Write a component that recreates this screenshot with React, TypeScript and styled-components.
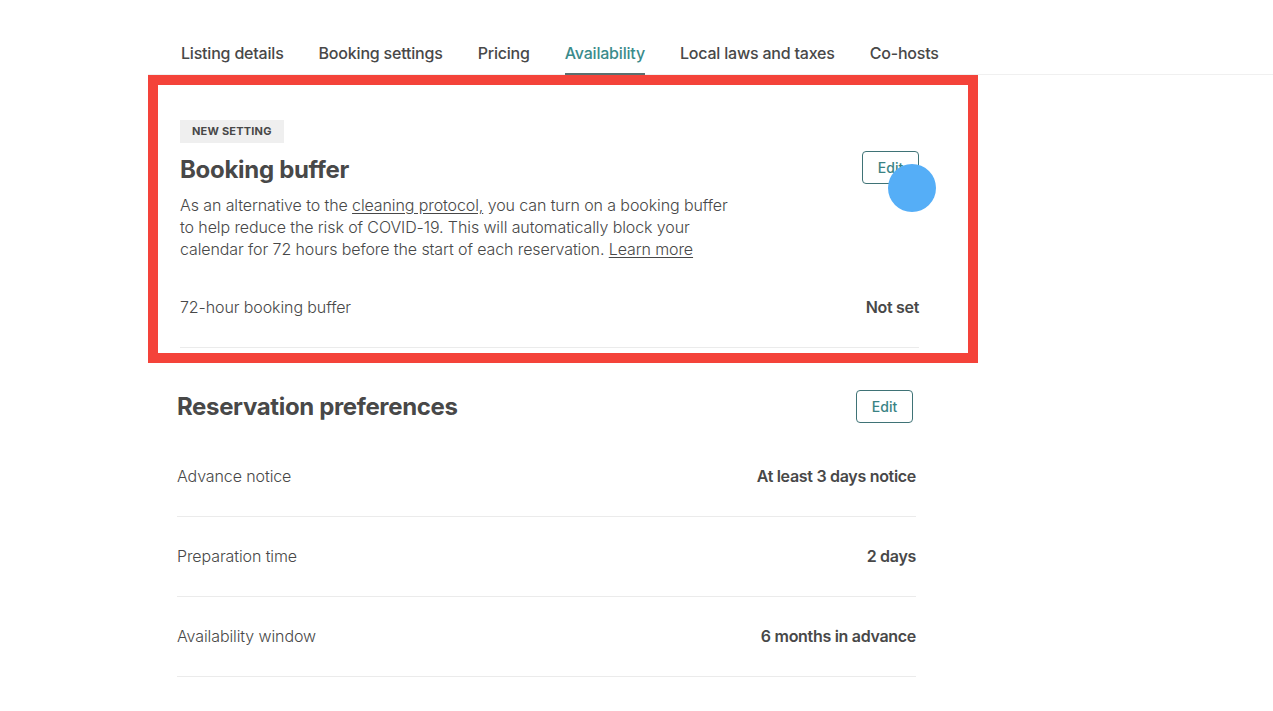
import * as React from "react";
import styled, { createGlobalStyle } from "styled-components";

const GlobalStyle = createGlobalStyle`
  body {
    margin: 0;
    background: #ffffff;
    font-family: Inter, "Noto Sans", "Liberation Sans", sans-serif;
    color: #484848;
    letter-spacing: -0.1px;
  }
`;

const Page = styled.div`
  width: 1273px;
  height: 711px;
  overflow: hidden;
  padding-left: 148px;
  box-sizing: border-box;
`;

const Nav = styled.nav`
  display: flex;
  gap: 35px;
  padding-left: 33px;
  border-bottom: 1px solid #f0f0f0;
`;

const Tab = styled.a<{ $active?: boolean }>`
  display: block;
  padding: 42px 0 9px;
  margin-bottom: -1px;
  font-size: 16px;
  line-height: 22px;
  font-weight: 500;
  letter-spacing: -0.2px;
  color: ${(p) => (p.$active ? "#3a8b8b" : "#484848")};
  border-bottom: 2px solid ${(p) => (p.$active ? "#5b6f6f" : "transparent")};
  white-space: nowrap;
`;

const Highlight = styled.section`
  width: 830px;
  box-sizing: border-box;
  border: 10px solid #f4433a;
  padding: 34px 49px 5px 22px;
`;

const Header = styled.div`
  display: flex;
  justify-content: space-between;
  align-items: flex-start;
`;

const Badge = styled.span`
  display: inline-block;
  background: #efefef;
  padding: 0 12px;
  height: 23px;
  line-height: 23px;
  font-size: 11px;
  font-weight: 700;
  letter-spacing: 0.2px;
  color: #484848;
`;

const Title = styled.h2`
  margin: 12px 0 0;
  font-size: 24px;
  line-height: 30px;
  font-weight: 700;
  letter-spacing: -0.3px;
  color: #484848;
`;

const Text = styled.p`
  margin: 9px 0 0;
  width: 556px;
  font-size: 16px;
  line-height: 22px;
  font-weight: 300;
  color: #484848;
`;

const Link = styled.a`
  color: #484848;
  text-decoration: underline;
  text-underline-offset: 2px;
`;

const ButtonWrap = styled.div<{ $top?: number }>`
  position: relative;
  margin-top: ${(p) => p.$top ?? 0}px;
`;

const EditButton = styled.button`
  width: 57px;
  height: 33px;
  border: 1px solid #3f7376;
  border-radius: 4px;
  background: #ffffff;
  color: #3a8384;
  font-family: inherit;
  font-size: 14px;
  font-weight: 500;
  padding: 0;
`;

const Dot = styled.span`
  position: absolute;
  left: 26px;
  top: 13px;
  width: 48px;
  height: 48px;
  border-radius: 50%;
  background: #55aef7;
`;

const Row = styled.div<{ $first?: boolean }>`
  display: flex;
  justify-content: space-between;
  align-items: center;
  padding: 28px 0 29px;
  margin-top: ${(p) => (p.$first ? 8 : 0)}px;
  border-bottom: 1px solid #ebebeb;
  font-size: 16px;
  line-height: 22px;
`;

const Label = styled.span`
  font-weight: 300;
  color: #484848;
`;

const Value = styled.span`
  font-weight: 600;
  letter-spacing: -0.3px;
  color: #484848;
`;

const Section = styled.section`
  width: 739px;
  margin: 27px 0 0 29px;
`;

const SectionHeader = styled.div`
  display: flex;
  justify-content: space-between;
  align-items: center;
  padding-right: 3px;
  margin-bottom: 14px;
`;

const SectionTitle = styled.h2`
  margin: 0;
  font-size: 24px;
  line-height: 30px;
  font-weight: 700;
  letter-spacing: -0.35px;
  color: #484848;
`;

const tabs = [
  "Listing details",
  "Booking settings",
  "Pricing",
  "Availability",
  "Local laws and taxes",
  "Co-hosts",
];

const prefs = [
  { label: "Advance notice", value: "At least 3 days notice" },
  { label: "Preparation time", value: "2 days" },
  { label: "Availability window", value: "6 months in advance" },
];

export default function App() {
  return (
    <Page>
      <GlobalStyle />
      <Nav>
        {tabs.map((t) => (
          <Tab key={t} $active={t === "Availability"}>
            {t}
          </Tab>
        ))}
      </Nav>

      <Highlight>
        <Header>
          <div>
            <Badge>NEW SETTING</Badge>
            <Title>Booking buffer</Title>
            <Text>
              As an alternative to the <Link>cleaning protocol,</Link> you can
              turn on a booking buffer to help reduce the risk of COVID-19. This
              will automatically block your calendar for 72 hours before the
              start of each reservation. <Link>Learn more</Link>
            </Text>
          </div>
          <ButtonWrap $top={32}>
            <EditButton>Edit</EditButton>
            <Dot />
          </ButtonWrap>
        </Header>
        <Row $first>
          <Label>72-hour booking buffer</Label>
          <Value>Not set</Value>
        </Row>
      </Highlight>

      <Section>
        <SectionHeader>
          <SectionTitle>Reservation preferences</SectionTitle>
          <EditButton>Edit</EditButton>
        </SectionHeader>
        {prefs.map((p) => (
          <Row key={p.label}>
            <Label>{p.label}</Label>
            <Value>{p.value}</Value>
          </Row>
        ))}
      </Section>
    </Page>
  );
}
